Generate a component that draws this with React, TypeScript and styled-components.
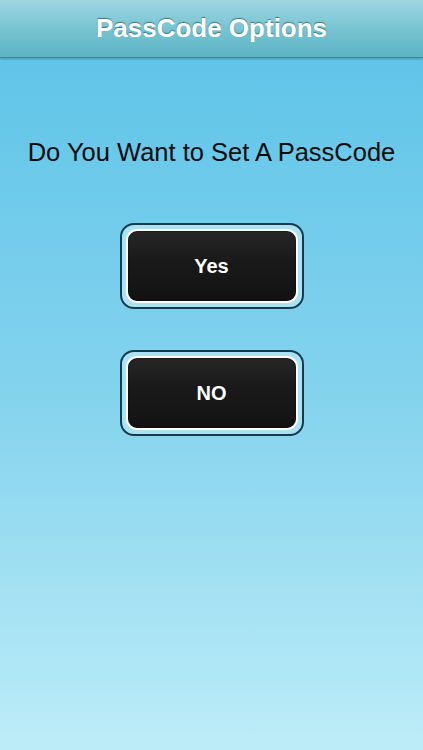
import React from "react";
import styled, { createGlobalStyle } from "styled-components";

const GlobalStyle = createGlobalStyle`
  html, body {
    margin: 0;
    padding: 0;
  }
  body {
    font-family: "Liberation Sans", Arial, sans-serif;
  }
`;

const Screen = styled.div`
  width: 423px;
  height: 750px;
  display: flex;
  flex-direction: column;
  background: linear-gradient(to bottom, #5ac2e8 0%, #86d4ee 55%, #bdedf8 100%);
  overflow: hidden;
`;

const Header = styled.header`
  height: 57px;
  display: flex;
  align-items: center;
  justify-content: center;
  background: linear-gradient(to bottom, #9fd6e2 0%, #78c4d2 50%, #5cb4c4 100%);
  border-bottom: 1px solid #3e8a98;
  box-shadow: 0 1px 2px rgba(30, 90, 110, 0.45);
`;

const Title = styled.h1`
  margin: 0;
  color: #ffffff;
  font-family: "Liberation Sans", Arial, sans-serif;
  font-size: 26px;
  font-weight: bold;
  text-shadow: 0 -1px 1px rgba(40, 80, 90, 0.7);
`;

const Body = styled.main`
  display: flex;
  flex-direction: column;
  align-items: center;
  padding-top: 79px;
`;

const Question = styled.p`
  margin: 0;
  font-family: "Liberation Sans", Arial, sans-serif;
  font-size: 25.5px;
  color: #0c0c0c;
  line-height: 30px;
`;

const ButtonList = styled.div`
  display: flex;
  flex-direction: column;
  gap: 41px;
  margin-top: 56px;
`;

const Frame = styled.div`
  width: 172px;
  height: 74px;
  border: 2px solid #163c4c;
  border-radius: 14px;
  background: #a9e2f3;
  padding: 4px;
  box-sizing: content-box;
  display: flex;
`;

const Button = styled.button`
  flex: 1;
  border: 2px solid #ffffff;
  border-radius: 11px;
  background: linear-gradient(to bottom, #262626 0%, #1a1a1a 40%, #121212 100%);
  color: #ffffff;
  font-family: "Liberation Sans", Arial, sans-serif;
  font-size: 20px;
  font-weight: bold;
  cursor: pointer;
  box-shadow: inset 0 0 2px rgba(0, 0, 0, 0.8);
`;

export default function App() {
  return (
    <>
      <GlobalStyle />
      <Screen>
        <Header>
          <Title>PassCode Options</Title>
        </Header>
        <Body>
          <Question>Do You Want to Set A PassCode</Question>
          <ButtonList>
            <Frame>
              <Button>Yes</Button>
            </Frame>
            <Frame>
              <Button>NO</Button>
            </Frame>
          </ButtonList>
        </Body>
      </Screen>
    </>
  );
}
